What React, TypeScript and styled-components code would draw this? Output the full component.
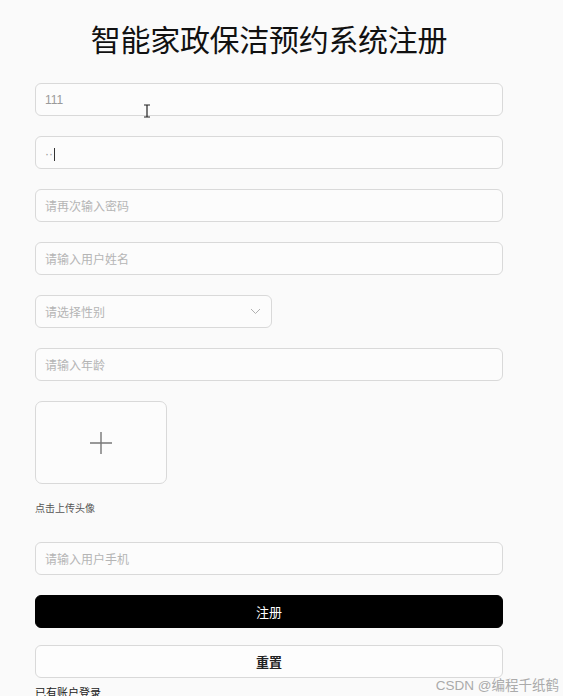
import React from 'react';
import styled, { createGlobalStyle } from 'styled-components';

const GlobalStyle = createGlobalStyle`
    html, body {
        margin: 0;
        padding: 0;
        background: #fafafa;
        font-family: "Noto Sans CJK SC", "Noto Sans", sans-serif;
    }
`;

const Page = styled.div`
    position: relative;
    width: 563px;
    height: 696px;
    overflow: hidden;
    background: #fafafa;
`;

const Form = styled.div`
    width: 468px;
    margin-left: 35px;
    display: flex;
    flex-direction: column;
`;

const Title = styled.h1`
    margin: 18px 0 0 0;
    height: 48px;
    font-size: 30px;
    line-height: 40px;
    font-weight: 400;
    color: #111;
    text-align: center;
    letter-spacing: -0.3px;
`;

const Field = styled.div<{ $width?: number; $mt?: number }>`
    box-sizing: border-box;
    width: ${(p) => (p.$width ? `${p.$width}px` : '100%')};
    height: 33px;
    margin-top: ${(p) => p.$mt ?? 20}px;
    border: 1px solid #d9d9d9;
    border-radius: 6px;
    background: #fcfcfc;
    display: flex;
    align-items: center;
    justify-content: space-between;
    padding: 0 10px 0 9px;
    font-size: 12px;
    color: #b5b5b5;
`;

const Value = styled.span`
    color: #9a9a9a;
    font-family: "Liberation Sans", Arial, sans-serif;
`;

const Caret = styled.span`
    display: inline-block;
    width: 1px;
    height: 13px;
    background: #333;
    margin-left: 1px;
    vertical-align: middle;
`;

const Upload = styled.div`
    box-sizing: border-box;
    width: 132px;
    height: 83px;
    margin-top: 20px;
    border: 1px solid #d9d9d9;
    border-radius: 7px;
    background: #fcfcfc;
    display: flex;
    align-items: center;
    justify-content: center;
`;

const Hint = styled.div`
    margin-top: 17px;
    font-size: 10px;
    line-height: 14px;
    color: #555;
`;

const Button = styled.button<{ $primary?: boolean; $mt: number }>`
    box-sizing: border-box;
    width: 100%;
    height: 33px;
    margin-top: ${(p) => p.$mt}px;
    border-radius: 6px;
    border: 1px solid ${(p) => (p.$primary ? '#000' : '#d9d9d9')};
    background: ${(p) => (p.$primary ? '#000' : '#fdfdfd')};
    color: ${(p) => (p.$primary ? '#fff' : '#222')};
    font-family: "Noto Sans CJK SC", sans-serif;
    font-size: 13px;
    font-weight: ${(p) => (p.$primary ? 400 : 700)};
    padding: 0;
`;

const LoginLink = styled.div`
    margin-top: 7px;
    font-size: 11px;
    line-height: 14px;
    color: #222;
`;

const Watermark = styled.div`
    position: absolute;
    right: 4px;
    bottom: 2px;
    font-size: 13.5px;
    color: #aaa;
    font-family: "Liberation Sans", "Noto Sans CJK SC", sans-serif;
`;

const Cursor = styled.svg`
    position: absolute;
    left: 143px;
    top: 104px;
`;

const Chevron = () => (
    <svg width="11" height="7" viewBox="0 0 11 7" fill="none">
        <path d="M1 1l4.5 4.5L10 1" stroke="#b0b0b0" strokeWidth="1" />
    </svg>
);

export default function App() {
    return (
        <Page>
            <GlobalStyle />
            <Form>
                <Title>智能家政保洁预约系统注册</Title>
                <Field $mt={17}>
                    <Value>111</Value>
                </Field>
                <Field>
                    <span>
                        <Value>··</Value>
                        <Caret />
                    </span>
                </Field>
                <Field>请再次输入密码</Field>
                <Field>请输入用户姓名</Field>
                <Field $width={237}>
                    请选择性别
                    <Chevron />
                </Field>
                <Field>请输入年龄</Field>
                <Upload>
                    <svg width="24" height="24" viewBox="0 0 24 24">
                        <path d="M12 1v22M1 12h22" stroke="#777" strokeWidth="1.4" />
                    </svg>
                </Upload>
                <Hint>点击上传头像</Hint>
                <Field $mt={27}>请输入用户手机</Field>
                <Button $primary $mt={20}>注册</Button>
                <Button $mt={17}>重置</Button>
                <LoginLink>已有账户登录</LoginLink>
            </Form>
            <Cursor width="8" height="14" viewBox="0 0 8 14">
                <path d="M1 1h6M4 1v12M1 13h6" stroke="#222" strokeWidth="1.2" fill="none" />
            </Cursor>
            <Watermark>CSDN @编程千纸鹤</Watermark>
        </Page>
    );
}
